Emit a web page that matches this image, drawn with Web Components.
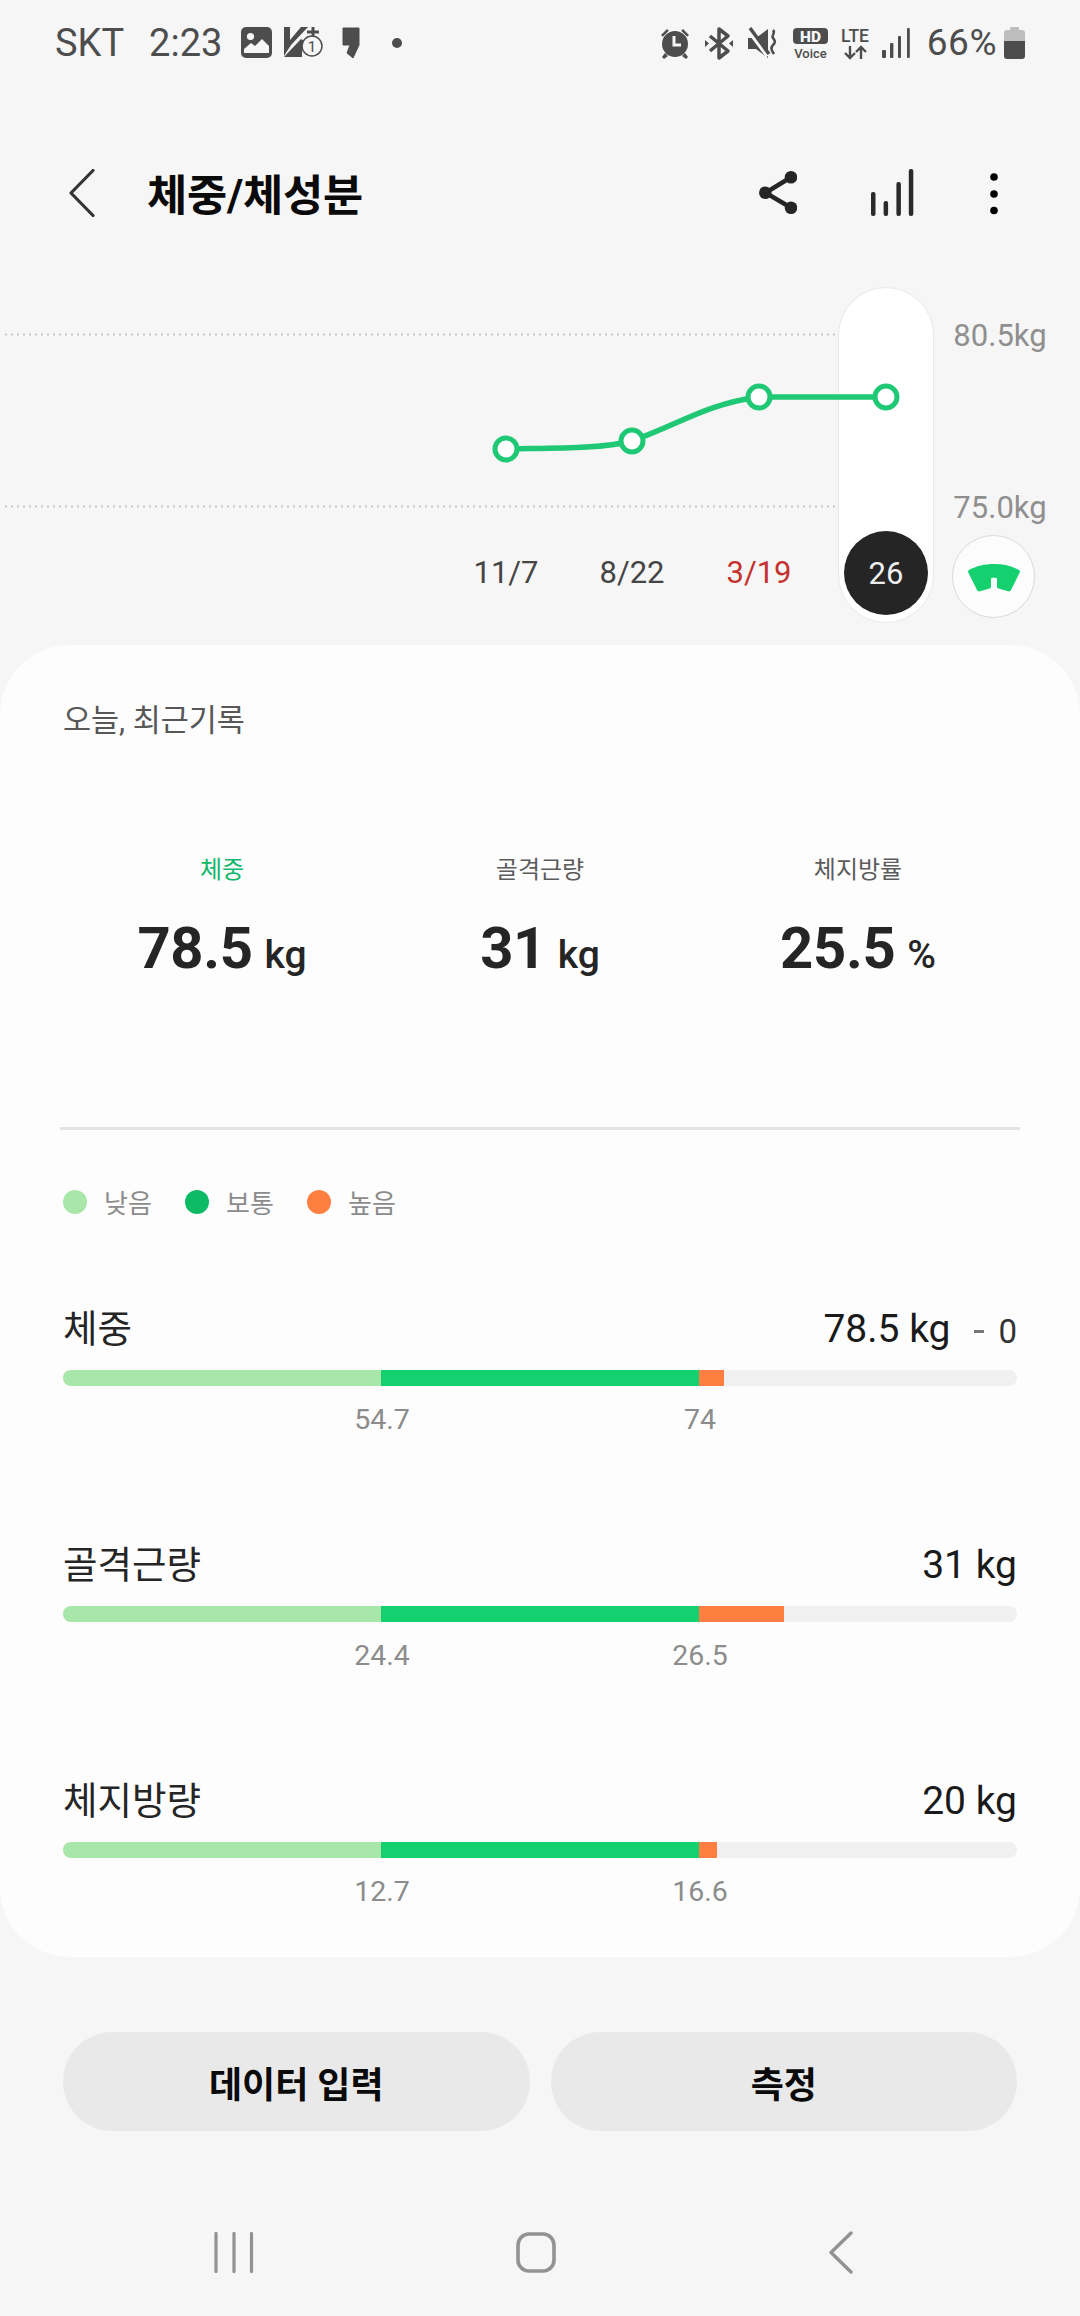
<!DOCTYPE html>
<html lang="ko"><head><meta charset="utf-8">
<style>
html,body{margin:0;padding:0;background:#f6f6f6}
body{width:1080px;height:2316px;overflow:hidden;font-family:Roboto,"Noto Sans CJK KR",sans-serif;display:flex;flex-direction:column}
</style></head><body>
<status-bar></status-bar>
<app-bar title="체중/체성분"></app-bar>
<weight-chart></weight-chart>
<main-card>
  <span slot="heading">오늘, 최근기록</span>
  <summary-stat slot="stats" label="체중" value="78.5" unit="kg" active></summary-stat>
  <summary-stat slot="stats" label="골격근량" value="31" unit="kg"></summary-stat>
  <summary-stat slot="stats" label="체지방률" value="25.5" unit="%"></summary-stat>
  <level-legend slot="legend"></level-legend>
  <level-row slot="rows" name="체중" value="78.5 kg" delta="0" low="54.7" high="74" over="25"></level-row>
  <level-row slot="rows" name="골격근량" value="31 kg" low="24.4" high="26.5" over="85"></level-row>
  <level-row slot="rows" name="체지방량" value="20 kg" low="12.7" high="16.6" over="18"></level-row>
</main-card>
<action-bar><pill-button>데이터 입력</pill-button><pill-button>측정</pill-button></action-bar>
<nav-bar></nav-bar>
<script>
const F='Roboto,"Noto Sans CJK KR",sans-serif';
function def(name,render){
  customElements.define(name,class extends HTMLElement{
    connectedCallback(){
      if(this.shadowRoot)return;
      this.attachShadow({mode:'open'}).innerHTML=render(this);
    }
  });
}
def('status-bar',()=>`<style>
:host{display:flex;align-items:center;height:86px;flex:none;padding:0 55px 0 55px;box-sizing:border-box;color:#4d4d4d;font:38px ${F}}
svg{display:block;flex:none;overflow:visible}
.sp{flex:1}
span{line-height:86px;white-space:nowrap}
</style>
<span>SKT</span><span style="margin-left:25px">2:23</span>
<svg style="margin-left:19px" width="31" height="32" viewBox="0 0 31 32"><rect width="31" height="31" rx="5" fill="#4d4d4d"/><circle cx="9.500" cy="9.500" r="3.600" fill="#f6f6f6"/><path d="M3 26v-4l7-6 4 3 7-7 7 7v7z" fill="#f6f6f6"/></svg>
<svg style="margin-left:12px" width="38" height="34" viewBox="0 0 38 34"><path d="M0 1h6v13L17 1h7L7 19l-7 11z" fill="#4d4d4d"/><path d="M0 31 17 13l7 4-6 8 0 6z" fill="#4d4d4d"/><path d="M29 1v12M23 6h12" stroke="#4d4d4d" stroke-width="3"/><circle cx="28" cy="20" r="10" fill="#f6f6f6" stroke="#4d4d4d" stroke-width="1.500"/><text x="28" y="26" text-anchor="middle" font-family="Roboto" font-size="15" fill="#4d4d4d">1</text></svg>
<svg style="margin-left:20px" width="18" height="32" viewBox="0 0 18 32"><path d="M1 1h16v17l-6 13-6-5 3-8H1z" fill="#4d4d4d" stroke="#4d4d4d" stroke-linejoin="round"/></svg>
<svg style="margin-left:32px" width="10" height="10"><circle cx="5" cy="5" r="5" fill="#4d4d4d"/></svg>
<div class="sp"></div>
<svg width="30" height="32" viewBox="0 0 30 32"><g fill="#4d4d4d"><circle cx="15" cy="17" r="13"/><path d="M1 8l6-6 1.800 1.800-6 6zM29 8l-6-6-1.800 1.800 6 6z"/><path d="M5 26l-3 4 2 2 4-3zM25 26l3 4-2 2-4-3z"/></g><path d="M14 9v9h7" fill="none" stroke="#f6f6f6" stroke-width="3"/></svg>
<svg style="margin-left:15px" width="28" height="33" viewBox="0 0 28 33"><path d="M5 9l18 15-9 7V2l9 7L5 24" fill="none" stroke="#4d4d4d" stroke-width="3.500" stroke-linejoin="round"/><path d="M0 13l4 3.500-4 3.500zM28 13l-4 3.500 4 3.500z" fill="#4d4d4d"/></svg>
<svg style="margin-left:15px" width="29" height="31" viewBox="0 0 29 31"><path d="M0 10h8l12-9v29L8 21H0z" fill="#4d4d4d"/><path d="M0 1l20 27" stroke="#f6f6f6" stroke-width="5"/><path d="M2 0l19 26" stroke="#4d4d4d" stroke-width="3.500"/><path d="M25 2c3 3-2 5 0 8s3 4 0 7-1 6 1 9" fill="none" stroke="#4d4d4d" stroke-width="2.600"/></svg>
<svg style="margin-left:16px" width="35" height="31" viewBox="0 0 35 31"><rect width="35" height="16" rx="4" fill="#4d4d4d"/><text x="17.500" y="13.500" text-anchor="middle" font-family="Roboto" font-weight="900" font-size="15.500" fill="#f6f6f6">HD</text><text x="17.500" y="30" text-anchor="middle" font-family="Roboto" font-weight="500" font-size="13" fill="#4d4d4d">Voice</text></svg>
<svg style="margin-left:11px" width="34" height="33" viewBox="0 0 34 33"><text x="16" y="15" text-anchor="middle" font-family="Roboto" font-weight="500" font-size="17.500" fill="#4d4d4d">LTE</text><path d="M11 19v12M6 26l5 5 5-5M22 32V20M17 25l5-5 5 5" fill="none" stroke="#4d4d4d" stroke-width="2.400"/></svg>
<svg style="margin-left:9px" width="28" height="30" viewBox="0 0 28 30"><g fill="#4d4d4d"><rect y="22" width="4" height="8" rx="1"/><rect x="8" y="15" width="3.400" height="15" rx="1"/><rect x="16" y="8" width="3" height="22" rx="1"/><rect x="25" y="0" width="2.800" height="30" rx="1"/></g></svg>
<span style="margin-left:17px;letter-spacing:.5px;font-size:37px">66%</span>
<svg style="margin-left:7px" width="21" height="32" viewBox="0 0 21 32"><path d="M0 6a3 3 0 0 1 3-3h3V1a1 1 0 0 1 1-1h7a1 1 0 0 1 1 1v2h3a3 3 0 0 1 3 3v8H0z" fill="#bdbdbd"/><path d="M0 14h21v15a3 3 0 0 1-3 3H3a3 3 0 0 1-3-3z" fill="#4d4d4d"/></svg>`);
def('app-bar',h=>`<style>
:host{display:flex;align-items:center;height:84px;flex:none;margin:66px 0 44px;color:#000;position:relative}
svg{display:block;flex:none}
h1{margin:3px 0 0 52px;font:700 43.700px/84px ${F};flex:1;color:#0a0a0a;letter-spacing:-.2px;white-space:nowrap}
</style>
<svg style="margin-left:69px;margin-top:-2px" width="26" height="48" viewBox="0 0 26 48"><path d="M24 1.500 2 24l22 22.500" fill="none" stroke="#333" stroke-width="3.200" stroke-linecap="round" stroke-linejoin="round"/></svg>
<h1>${h.getAttribute('title')}</h1>
<svg style="margin-top:-3px" width="38" height="43" viewBox="0 0 38 43"><path d="M32 6.300 6.500 21.700 32 36.700" fill="none" stroke="#252525" stroke-width="4.500"/><circle cx="32" cy="6.300" r="6.300" fill="#252525"/><circle cx="6.300" cy="21.700" r="6.300" fill="#252525"/><circle cx="32" cy="36.700" r="6.300" fill="#252525"/></svg>
<svg style="margin-left:74px;margin-top:-3px" width="43" height="47" viewBox="0 0 43 47"><g fill="#2a2a2a"><rect x="0" y="23" width="4.500" height="24" rx="2"/><rect x="12.600" y="32" width="4.500" height="15" rx="2"/><rect x="25.400" y="13" width="4.500" height="34" rx="2"/><rect x="37.800" y="0" width="4.500" height="47" rx="2"/></g></svg>
<svg style="margin-left:76px;margin-right:82px;margin-top:-1px" width="8" height="42" viewBox="0 0 8 42"><g fill="#000"><circle cx="4" cy="4" r="3.800"/><circle cx="4" cy="21" r="3.800"/><circle cx="4" cy="37.500" r="3.800"/></g></svg>`);
def('weight-chart',()=>{
  const nodes=[[506,449],[632,441],[759,397],[886,397]];
  return `<style>
:host{display:block;position:relative;height:365px;flex:none;font-family:${F}}
svg{position:absolute;left:0;top:0}
.pill{position:absolute;left:838px;top:7px;width:96px;height:336px;box-sizing:border-box;border-radius:48px;background:#fff;border:1px solid #e8e8e8}
.t{position:absolute;line-height:40px;font-size:31px;white-space:nowrap;transform:translateX(-50%)}
.y{color:#8f8f8f;left:1000px}
.d{top:273px;color:#454545}
.today{position:absolute;left:844px;top:251px;width:84px;height:84px;border-radius:50%;background:#252525;color:#eee;display:flex;align-items:center;justify-content:center;font-size:31px}
.scale{position:absolute;left:952px;top:255px;width:83px;height:83px;box-sizing:border-box;border-radius:50%;background:#fcfcfc;border:1.500px solid #d9d9d9;display:flex;align-items:center;justify-content:center}
</style>
<svg width="1080" height="365" viewBox="0 280 1080 365" style="z-index:0"><path d="M5 334.500H838M5 506.500H838" stroke="#c9c9c9" stroke-width="2" stroke-dasharray="2 4"/></svg>
<div class="pill"></div>
<svg width="1080" height="365" viewBox="0 280 1080 365"><path d="M506 449C555 448 600 449 632 441 680 424 706 404 759 397H886" fill="none" stroke="#1fc875" stroke-width="5.500"/>
${nodes.map(n=>`<circle cx="${n[0]}" cy="${n[1]}" r="11" fill="#fff" stroke="#1fc875" stroke-width="5"/>`).join('')}</svg>
<span class="t y" style="top:36px">80.5kg</span><span class="t y" style="top:208px">75.0kg</span>
<span class="t d" style="left:506px">11/7</span><span class="t d" style="left:632px">8/22</span><span class="t d" style="left:759px;color:#c4322d">3/19</span>
<div class="today">26</div>
<div class="scale"><svg style="position:static;margin-top:3px" width="54" height="30" viewBox="0 0 54 30"><path d="M2 7C16 -1 38 -1 52 7c1 .7 1.200 1.700.7 2.600L44 27c-.8 1.300-1.800 1.700-3 1.300l-9.500-2.800c-1-.4-1.500-1-1.500-2V16.500c0-1.200-.6-1.800-1.500-1.800h-3c-.9 0-1.500.6-1.500 1.800v7c0 1-.5 1.600-1.500 2L13 28.300c-1.200.4-2.200 0-3-1.300L1.300 9.600C.8 8.700 1 7.700 2 7z" fill="#14d06f"/></svg></div>`;
});
def('main-card',()=>`<style>
:host{display:block;flex:none;height:1312px;box-sizing:border-box;background:#fdfdfd;border-radius:70px;padding:56px 63px 48px;font-family:${F}}
.h{font-size:30.500px;line-height:40px;color:#575757;white-space:nowrap}
.stats{display:grid;grid-template-columns:repeat(3,318px);margin-top:109px}
hr{border:0;height:2.500px;background:#e4e4e4;margin:144px -3px 0}
.legend{margin-top:52px}
.rows{display:flex;flex-direction:column;gap:102px;margin-top:82px}
</style>
<div class="h"><slot name="heading"></slot></div>
<div class="stats"><slot name="stats"></slot></div>
<hr>
<div class="legend"><slot name="legend"></slot></div>
<div class="rows"><slot name="rows"></slot></div>`);
def('summary-stat',h=>`<style>
:host{display:flex;flex-direction:column;align-items:center;font-family:${F}}
.l{font-size:24px;line-height:40px;color:${h.hasAttribute('active')?'#12b76a':'#5c5c5c'}}
.v{margin-top:23px;height:70px;line-height:70px;font-size:58px;font-weight:700;color:#252525;white-space:nowrap;letter-spacing:-.3px}
.u{font-size:39px;font-weight:500;line-height:1;letter-spacing:0;margin-left:2px}
</style><div class="l">${h.getAttribute('label')}</div><div class="v">${h.getAttribute('value')}<span class="u"> ${h.getAttribute('unit')}</span></div>`);
def('level-legend',()=>`<style>
:host{display:flex;align-items:center;height:40px;font:26px ${F};color:#8c8c8c}
i{width:24px;height:24px;border-radius:50%;margin-right:17px;flex:none}
span{margin-right:35px;width:46px;white-space:nowrap}
</style><i style="background:#a8e6a9"></i><span>낮음</span><i style="background:#0dbb66"></i><span>보통</span><i style="background:#ff7f41"></i><span>높음</span>`);
def('level-row',h=>{
  const d=h.getAttribute('delta');
  return `<style>
:host{display:block;font-family:${F}}
.head{display:flex;align-items:center;justify-content:space-between;height:50px;white-space:nowrap}
.n{font-size:37.500px;color:#252525;margin-top:-6px}
.val{font-size:39px;color:#1a1a1a;display:flex;align-items:center}
.del{font-size:33px;margin-left:24px;display:flex;align-items:center;gap:14px;padding-top:6px;color:#333}
.del i{width:10px;height:3.500px;background:#777;display:block}
.bar{display:flex;height:16px;margin-top:16px;border-radius:8px;overflow:hidden;background:#f0f0f0}
.bar b{display:block;height:100%;flex:none}
.ticks{display:flex;margin-top:16px;height:36px;line-height:36px;font-size:28.500px;color:#8c8c8c}
.ticks s{display:block;width:318px;flex:none}
.ticks span{width:0;display:flex;justify-content:center;white-space:nowrap;margin-left:1px;margin-right:-1px}
</style>
<div class="head"><span class="n">${h.getAttribute('name')}</span><span class="val">${h.getAttribute('value')}${d?`<span class="del"><i></i>${d}</span>`:''}</span></div>
<div class="bar"><b style="width:318px;background:#a8e6a9"></b><b style="width:318px;background:#14d06f"></b><b style="width:${h.getAttribute('over')}px;background:#ff7f41"></b></div>
<div class="ticks"><s></s><span>${h.getAttribute('low')}</span><s></s><span>${h.getAttribute('high')}</span></div>`;
});
def('action-bar',()=>`<style>
:host{display:flex;flex:none;gap:21px;padding:0 63px;margin-top:75px}
</style><slot></slot>`);
def('pill-button',()=>`<style>
:host{flex:1;display:flex;align-items:center;justify-content:center;height:99px;border-radius:50px;background:#e9e9e9;color:#0a0a0a;font:700 36px ${F}}
</style><slot></slot>`);
def('nav-bar',()=>`<style>
:host{display:flex;flex:none;justify-content:flex-start;align-items:center;margin-top:101px;height:41px}
svg{display:block;flex:none}
</style>
<svg style="margin-left:214px" width="40" height="41" viewBox="0 0 40 41"><path d="M2 1.500v38M20 1.500v38M37.500 1.500v38" stroke="#929292" stroke-width="3.200" stroke-linecap="round"/></svg>
<svg style="margin-left:262px" width="40" height="41" viewBox="0 0 40 41"><rect x="2" y="2" width="36" height="37" rx="11" fill="none" stroke="#929292" stroke-width="3.600"/></svg>
<svg style="margin-left:272px" width="25" height="43" viewBox="0 0 25 43"><path d="M23 2 3 21.500 23 41" fill="none" stroke="#929292" stroke-width="3.400" stroke-linecap="round" stroke-linejoin="round"/></svg>`);
</script>
</body></html>
